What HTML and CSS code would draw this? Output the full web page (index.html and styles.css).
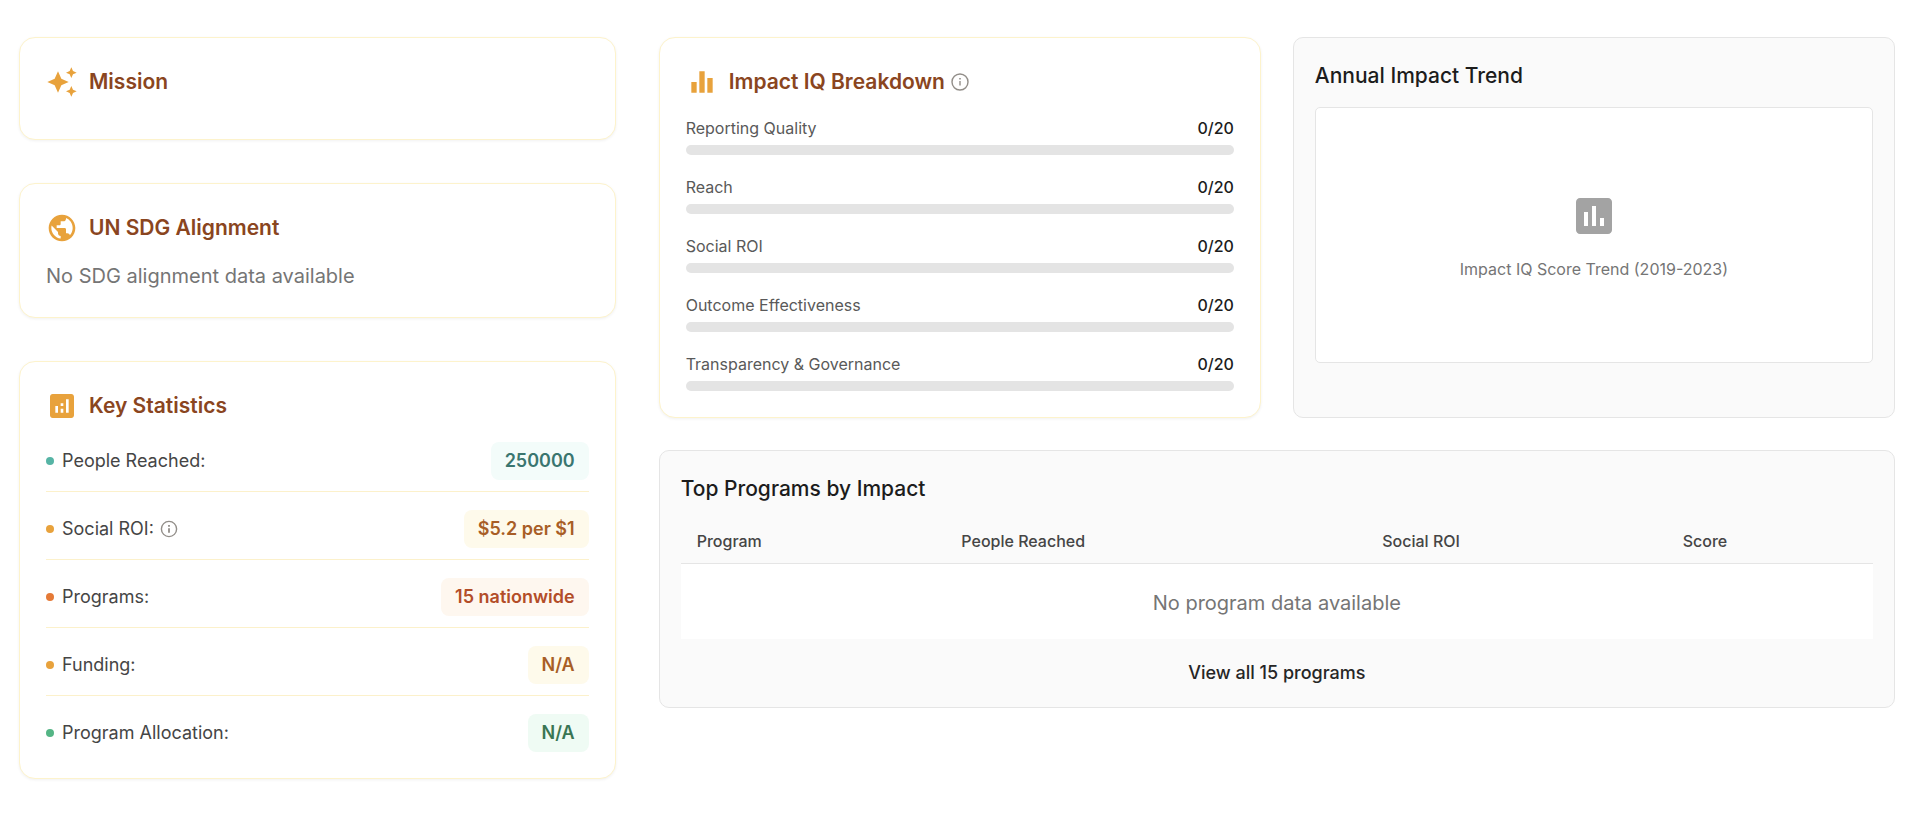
FILE: index.html
```html
<!DOCTYPE html>
<html lang="en">
<head>
<meta charset="utf-8">
<meta name="viewport" content="width=device-width, initial-scale=1">
<title>Impact overview</title>
<link rel="stylesheet" href="styles.css">
</head>
<body>
<main class="page">
  <div class="side">
    <section class="card">
      <header class="card-head">
        <svg class="icon" viewBox="0 0 24 24" aria-hidden="true"><path d="m19 9 1.250-2.750L23 5l-2.750-1.250L19 1l-1.250 2.750L15 5l2.750 1.250zM19 15l-1.250 2.750L15 19l2.750 1.250L19 23l1.250-2.750L23 19l-2.750-1.250zM11.500 9.500 9 4 6.500 9.500 1 12l5.500 2.500L9 20l2.500-5.500L17 12z"/></svg>
        <h2 class="card-title">Mission</h2>
      </header>
    </section>

    <section class="card">
      <header class="card-head">
        <svg class="icon" viewBox="0 0 24 24" aria-hidden="true"><path d="M12 2C6.480 2 2 6.480 2 12s4.480 10 10 10 10-4.480 10-10S17.520 2 12 2m-1 17.930c-3.950-.490-7-3.850-7-7.930 0-.620.080-1.210.210-1.790L9 15v1c0 1.100.900 2 2 2zm6.900-2.540c-.260-.810-1-1.390-1.900-1.390h-1v-3c0-.550-.450-1-1-1H8v-2h2c.550 0 1-.450 1-1V7h2c1.100 0 2-.900 2-2v-.410c2.930 1.190 5 4.060 5 7.410 0 2.080-.800 3.970-2.100 5.390"/></svg>
        <h2 class="card-title">UN SDG Alignment</h2>
      </header>
      <p class="note">No SDG alignment data available</p>
    </section>

    <section class="card">
      <header class="card-head">
        <svg class="icon" viewBox="0 0 24 24" aria-hidden="true"><path d="M19 3H5c-1.100 0-2 .900-2 2v14c0 1.100.900 2 2 2h14c1.100 0 2-.900 2-2V5c0-1.100-.900-2-2-2M9 17H7v-5h2zm4 0h-2v-3h2zm0-5h-2v-2h2zm4 5h-2V7h2z"/></svg>
        <h2 class="card-title">Key Statistics</h2>
      </header>
      <ul class="stats">
        <li class="stat"><span class="stat-label teal">People Reached:</span><span class="badge badge-teal">250000</span></li>
        <li class="stat"><span class="stat-label amber">Social ROI:
          <button class="info" type="button" aria-label="About social ROI"><svg class="info-icon" viewBox="0 0 20 20"><circle cx="10" cy="10" r="7.600"/><path class="solid" d="M9.100 9.200h1.800v4.600H9.100zM9.100 6h1.800v1.800H9.100z"/></svg></button></span><span class="badge badge-amber">$5.2 per $1</span></li>
        <li class="stat"><span class="stat-label orange">Programs:</span><span class="badge badge-orange">15 nationwide</span></li>
        <li class="stat"><span class="stat-label amber">Funding:</span><span class="badge badge-amber">N/A</span></li>
        <li class="stat"><span class="stat-label green">Program Allocation:</span><span class="badge badge-green">N/A</span></li>
      </ul>
    </section>
  </div>

  <div class="main">
    <section class="card">
      <header class="card-head">
        <svg class="icon" viewBox="0 0 24 24" aria-hidden="true"><path d="M10 20h4V4h-4zm-6 0h4v-8H4zM16 9v11h4V9z"/></svg>
        <h2 class="card-title">Impact IQ Breakdown</h2>
        <button class="info" type="button" aria-label="About Impact IQ"><svg class="info-icon" viewBox="0 0 20 20"><circle cx="10" cy="10" r="8"/><path d="M10 9v4.500"/><path class="solid" d="M9.200 6h1.600v1.600H9.200z"/></svg></button>
      </header>
      <ul class="metrics">
        <li class="metric"><span class="metric-label">Reporting Quality</span><span class="metric-value">0/20</span><span class="track"></span></li>
        <li class="metric"><span class="metric-label">Reach</span><span class="metric-value">0/20</span><span class="track"></span></li>
        <li class="metric"><span class="metric-label">Social ROI</span><span class="metric-value">0/20</span><span class="track"></span></li>
        <li class="metric"><span class="metric-label">Outcome Effectiveness</span><span class="metric-value">0/20</span><span class="track"></span></li>
        <li class="metric"><span class="metric-label">Transparency &amp; Governance</span><span class="metric-value">0/20</span><span class="track"></span></li>
      </ul>
    </section>

    <section class="panel">
      <h2 class="panel-title">Annual Impact Trend</h2>
      <div class="chart">
        <svg class="chart-icon" viewBox="0 0 24 24" aria-hidden="true"><path d="M19 3H5c-1.100 0-2 .900-2 2v14c0 1.100.900 2 2 2h14c1.100 0 2-.900 2-2V5c0-1.100-.900-2-2-2M9 17H7v-7h2zm4 0h-2V7h2zm4 0h-2v-4h2z"/></svg>
        <p class="chart-text">Impact IQ Score Trend (2019-2023)</p>
      </div>
    </section>

    <section class="panel wide">
      <h2 class="panel-title">Top Programs by Impact</h2>
      <table class="programs">
        <thead>
          <tr><th class="col-program" scope="col">Program</th><th class="col-people" scope="col">People Reached</th><th class="col-roi" scope="col">Social ROI</th><th scope="col">Score</th></tr>
        </thead>
        <tbody>
          <tr><td colspan="4">No program data available</td></tr>
        </tbody>
      </table>
      <a class="view-all" href="#programs">View all 15 programs</a>
    </section>
  </div>
</main>
</body>
</html>
```
FILE: styles.css
```css
* {
  box-sizing: border-box;
}

body {
  margin: 0;
  background: #fff;
  color: #1c1c1c;
  font-family: Inter, "Liberation Sans", sans-serif;
}

h2,
p,
ul {
  margin: 0;
  padding: 0;
}

ul {
  list-style: none;
}

.page {
  display: grid;
  grid-template-columns: repeat(3, minmax(0, 1fr));
  align-items: start;
  gap: 43px;
  padding: 37px 33px 32px 19px;
}

.side {
  display: grid;
  gap: 43px;
}

.main {
  grid-column: span 2;
  display: grid;
  grid-template-columns: repeat(2, minmax(0, 1fr));
  gap: 32px;
}

.wide {
  grid-column: 1 / -1;
}

/* Cards with a warm outline */
.card {
  padding: 26px;
  border: 1px solid #fdf3cc;
  border-radius: 16px;
  background: #fff;
  box-shadow: 0 1px 3px rgba(0, 0, 0, 0.06);
}

.card-head {
  display: flex;
  align-items: center;
  height: 36px;
  margin-bottom: 13px;
}

.icon {
  width: 32px;
  height: 32px;
  margin-right: 11px;
  fill: #e8a23c;
}

.card-title {
  color: #8a4520;
  font-size: 21px;
  font-weight: 600;
  line-height: 36px;
}

.note {
  padding-top: 2px;
  color: #757575;
  font-size: 20px;
  line-height: 30px;
}

.info {
  display: inline-flex;
  margin-left: 5px;
  padding: 0;
  border: 0;
  background: none;
}

.info-icon {
  width: 20px;
  height: 20px;
  fill: none;
  stroke: #928e89;
  stroke-width: 1.4;
}

.solid {
  fill: #928e89;
  stroke: none;
}

/* Key statistics */
.stats {
  display: grid;
  gap: 18px;
  padding-top: 5px;
}

.stat {
  display: flex;
  align-items: center;
  justify-content: space-between;
  padding-bottom: 11px;
  border-bottom: 1px solid #fcf1cb;
}

.stat:last-child {
  padding-bottom: 0;
  border-bottom: 0;
}

.stat-label {
  display: flex;
  align-items: center;
  color: #454545;
  font-size: 18px;
  line-height: 26px;
}

.stat-label::before {
  content: "";
  width: 8px;
  height: 8px;
  margin-right: 8px;
  border-radius: 50%;
  background: currentColor;
}

.teal::before {
  background: #56b4a5;
}

.amber::before {
  background: #e8a23c;
}

.orange::before {
  background: #e57a37;
}

.green::before {
  background: #54b585;
}

.badge {
  padding: 6px 14px;
  border-radius: 8px;
  font-size: 18px;
  font-weight: 600;
  line-height: 26px;
}

.badge-teal {
  background: #f3fcfa;
  color: #3a7670;
}

.badge-amber {
  background: #fefaeb;
  color: #a85e26;
}

.badge-orange {
  background: #fef7ef;
  color: #b34d28;
}

.badge-green {
  background: #effbf4;
  color: #3a7553;
}

/* Score breakdown */
.metrics {
  display: grid;
  gap: 20px;
  padding-top: 3px;
}

.metric {
  display: grid;
  grid-template-columns: 1fr auto;
  row-gap: 5px;
  font-size: 16px;
  line-height: 24px;
}

.metric-label {
  color: #595959;
}

.metric-value {
  font-weight: 500;
}

.track {
  grid-column: 1 / -1;
  height: 10px;
  border-radius: 5px;
  background: #e4e4e4;
}

/* Neutral panels */
.panel {
  padding: 21px;
  border: 1px solid #e5e5e5;
  border-radius: 10px;
  background: #fafafa;
}

.panel-title {
  margin-bottom: 14px;
  font-size: 21px;
  font-weight: 500;
  line-height: 34px;
}

.chart {
  display: flex;
  flex-direction: column;
  align-items: center;
  justify-content: center;
  gap: 17px;
  min-height: 256px;
  padding-top: 3px;
  border: 1px solid #e5e5e5;
  border-radius: 5px;
  background: #fff;
}

.chart-icon {
  width: 48px;
  height: 48px;
  fill: #a3a3a3;
}

.chart-text {
  color: #757575;
  font-size: 16px;
  line-height: 24px;
}

.programs {
  width: 100%;
  border-collapse: collapse;
}

.programs th {
  padding: 9px 16px 10px;
  border-bottom: 1px solid #e5e5e5;
  color: #454545;
  font-size: 16px;
  font-weight: 500;
  line-height: 24px;
  text-align: left;
}

.col-program {
  width: 22.2%;
}

.col-people {
  width: 35.3%;
}

.col-roi {
  width: 25.2%;
}

.programs td {
  padding: 24px 16px 21px;
  background: #fff;
  color: #757575;
  font-size: 20px;
  line-height: 30px;
  text-align: center;
}

.view-all {
  display: block;
  width: fit-content;
  margin: 21px auto 0;
  color: #262626;
  font-size: 18px;
  font-weight: 500;
  line-height: 26px;
  text-decoration: none;
}
```
